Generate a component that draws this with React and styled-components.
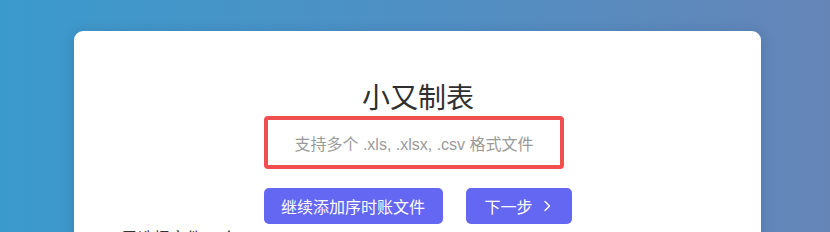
import React from "react";
import styled, { createGlobalStyle } from "styled-components";

const Global = createGlobalStyle`
  html, body { margin: 0; padding: 0; }
  body {
    font-family: "Liberation Sans", "Noto Sans CJK SC", sans-serif;
    background: linear-gradient(90deg, #3b9acc 0%, #4f90c4 50%, #6585b7 100%);
    min-height: 100vh;
    overflow: hidden;
  }
`;

const Page = styled.div`
  padding: 31px 0 0 74px;
`;

const Card = styled.div`
  width: 687px;
  box-sizing: border-box;
  background: #fff;
  border-radius: 9px;
  box-shadow: 0 2px 14px rgba(20, 40, 90, 0.18);
  padding: 51px 48px 40px;
  display: flex;
  flex-direction: column;
`;

const Title = styled.h1`
  margin: 0;
  font-size: 28px;
  font-weight: 400;
  line-height: 34px;
  color: #2f2f2f;
  text-align: center;
  padding-left: 1px;
`;

const Highlight = styled.div`
  align-self: center;
  margin: 0 0 0 -7px;
  width: 300px;
  height: 53px;
  box-sizing: border-box;
  border: 4px solid #f04f50;
  border-radius: 4px;
  display: flex;
  align-items: center;
  justify-content: center;
`;

const Subtitle = styled.p`
  margin: 0;
  font-size: 16px;
  color: #9a9a9a;
  padding-top: 1px;
`;

const Actions = styled.div`
  display: flex;
  justify-content: center;
  gap: 23px;
  margin-top: 19px;
`;

const Button = styled.button`
  height: 36px;
  width: ${(p) => p.$w}px;
  border: none;
  border-radius: 5px;
  background: #6467f1;
  color: #fff;
  font-family: "Liberation Sans", "Noto Sans CJK SC", sans-serif;
  font-size: 16px;
  display: inline-flex;
  align-items: center;
  justify-content: center;
  gap: 8px;
  padding: 0;
  cursor: pointer;
`;

const Selected = styled.h3`
  margin: 5px 0 0;
  font-size: 16px;
  font-weight: 400;
  color: #333;
  line-height: 20px;
`;

export default function App() {
  return (
    <>
      <Global />
      <Page>
        <Card>
          <Title>小又制表</Title>
          <Highlight>
            <Subtitle>支持多个 .xls, .xlsx, .csv 格式文件</Subtitle>
          </Highlight>
          <Actions>
            <Button $w={179}>继续添加序时账文件</Button>
            <Button $w={106}>
              下一步
              <svg width="12" height="14" viewBox="0 0 12 14" fill="none">
                <path d="M4 2.5 L8.5 7 L4 11.5" stroke="#fff" strokeWidth="1.4" strokeLinecap="round" strokeLinejoin="round" />
              </svg>
            </Button>
          </Actions>
          <Selected>已选择文件 (1个):</Selected>
        </Card>
      </Page>
    </>
  );
}
